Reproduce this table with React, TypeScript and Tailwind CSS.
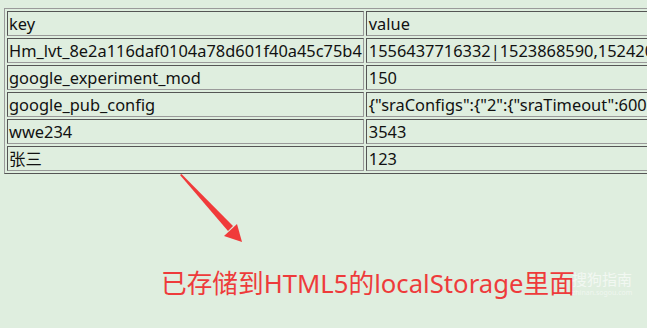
import React from 'react';

const rows: [string, string][] = [
  ['key', 'value'],
  ['Hm_lvt_8e2a116daf0104a78d601f40a45c75b4', '1556437716332|1523868590,1524207789,1524486502'],
  ['google_experiment_mod', '150'],
  ['google_pub_config', '{"sraConfigs":{"2":{"sraTimeout":60000}}}'],
  ['wwe234', '3543'],
  ['张三', '123'],
];

const App: React.FC = () => {
  return (
    <div
      className="relative w-[647px] h-[328px] overflow-hidden bg-[#dfeedf] pt-[8px] pl-[4px]"
      style={{ fontFamily: '"Noto Sans", "Noto Sans CJK SC", sans-serif' }}
    >
      {/* storage table */}
      <table className="border-separate border-spacing-[2px] border border-t-[#9a9a9a] border-l-[#9a9a9a] border-r-[#555] border-b-[#555] w-[900px] text-[16.4px] text-[#111] leading-[21px]">
        <tbody>
          {rows.map(([k, v]) => (
            <tr key={k}>
              <td className="w-[356px] h-[25px] px-[1px] py-0 whitespace-nowrap border border-t-[#555] border-l-[#555] border-r-[#9a9a9a] border-b-[#9a9a9a]">
                {k}
              </td>
              <td className="h-[25px] px-[2px] py-0 whitespace-nowrap border border-t-[#555] border-l-[#555] border-r-[#9a9a9a] border-b-[#9a9a9a]">
                {v}
              </td>
            </tr>
          ))}
        </tbody>
      </table>

      {/* red arrow */}
      <svg className="absolute left-0 top-0" width="647" height="328" viewBox="0 0 647 328">
        <polygon points="180,175 181.5,174 233,226 228,231" fill="#f03a3a" />
        <polygon points="224,236 237,224 242,242" fill="#f03a3a" />
      </svg>

      {/* caption */}
      <div className="absolute left-[161px] top-[267px] text-[25.7px] leading-[34px] text-[#ee3b3b] whitespace-nowrap">
        已存储到HTML5的localStorage里面
      </div>

      {/* watermark */}
      <div className="absolute left-[572px] top-[270px] flex flex-col items-start text-white/60">
        <span className="text-[15px] leading-[18px]">搜狗指南</span>
        <span className="text-[7px] leading-[9px] text-white/50">zhinan.sogou.com</span>
      </div>
    </div>
  );
};

export default App;
